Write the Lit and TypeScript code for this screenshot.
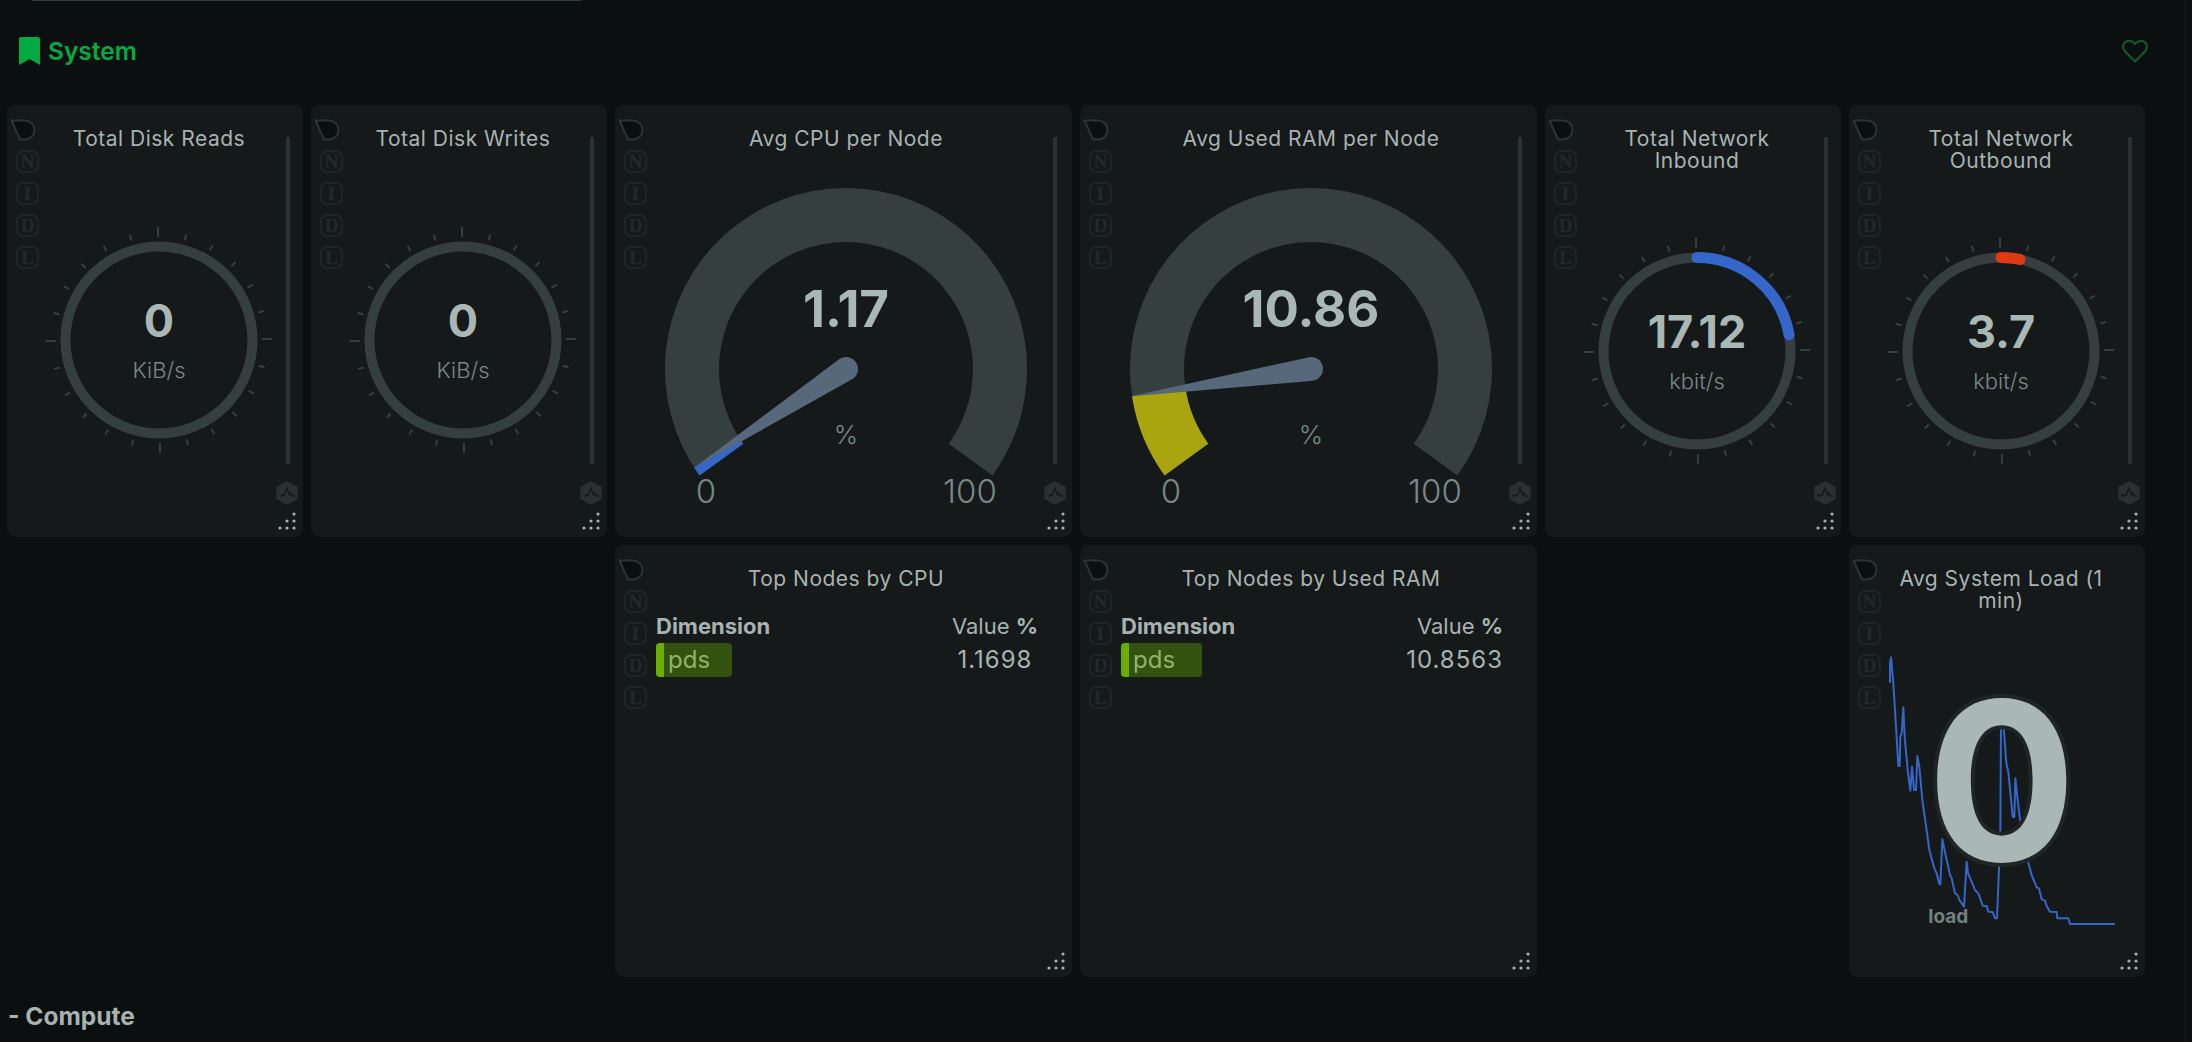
import { LitElement, css, html, svg } from "lit";
import { customElement } from "lit/decorators.js";

const BLUE = "#3566c9";
const RED = "#e03a12";
const YELLOW = "#a9a50e";

type Card =
  | { kind: "ring"; title: string; value: string; unit: string; sweep?: number; color?: string }
  | { kind: "dial"; title: string; value: string; pct: number; color: string }
  | { kind: "table"; title: string; value: string; pill: number }
  | { kind: "load"; title: string };

// row 1 runs across all six columns, row 2 only has cards under columns 3, 4 and 6
const CARDS: (Card & { col: number; row: number })[] = [
  { col: 1, row: 1, kind: "ring", title: "Total Disk Reads", value: "0", unit: "KiB/s" },
  { col: 2, row: 1, kind: "ring", title: "Total Disk Writes", value: "0", unit: "KiB/s" },
  { col: 3, row: 1, kind: "dial", title: "Avg CPU per Node", value: "1.17", pct: 1.17, color: BLUE },
  { col: 4, row: 1, kind: "dial", title: "Avg Used RAM per Node", value: "10.86", pct: 10.86, color: YELLOW },
  { col: 5, row: 1, kind: "ring", title: "Total Network Inbound", value: "17.12", unit: "kbit/s", sweep: 80, color: BLUE },
  { col: 6, row: 1, kind: "ring", title: "Total Network Outbound", value: "3.7", unit: "kbit/s", sweep: 11.7, color: RED },
  { col: 3, row: 2, kind: "table", title: "Top Nodes by CPU", value: "1.1698", pill: 76 },
  { col: 4, row: 2, kind: "table", title: "Top Nodes by Used RAM", value: "10.8563", pill: 81 },
  { col: 6, row: 2, kind: "load", title: "Avg System Load (1 min)" },
];

// traced from the chart, in 1/3 px units
const LOAD_LINE =
  "150,428 150,370 153,352 160,430 168,560 175,678 179,678 181,590 185,580 190,502 194,590 203,690 211,752 216,680 222,750 228,750 232,648 238,680 247,780 257,850 268,930 283,985 290,1000 297,1030 301,1033 307,898 318,950 330,1005 335,1015 345,1060 353,1065 358,1080 372,1100 380,965 384,1000 395,1025 405,1050 415,1060 428,1097 440,1098 445,1115 458,1116 465,1135 471,1135 477,985 481,875 483,560 487,530 491,560 499,670 505,695 518,830 523,832 526,715 533,780 541,845 565,968 575,1005 590,1042 597,1045 605,1078 615,1082 620,1098 630,1115 650,1116 652,1135 685,1135 690,1152 825,1152";

const polar = (r: number, deg: number) => {
  const a = (deg * Math.PI) / 180;
  return [r * Math.sin(a), -r * Math.cos(a)];
};

const wedge = (r1: number, r2: number, from: number, to: number) => {
  const [ax, ay] = polar(r1, from);
  const [bx, by] = polar(r1, to);
  const [cx, cy] = polar(r2, to);
  const [dx, dy] = polar(r2, from);
  const large = to - from > 180 ? 1 : 0;
  return `M${ax} ${ay}A${r1} ${r1} 0 ${large} 1 ${bx} ${by}L${cx} ${cy}A${r2} ${r2} 0 ${large} 0 ${dx} ${dy}Z`;
};

@customElement("app-root")
export class AppRoot extends LitElement {
  static styles = css`
    :host {
      display: flex;
      height: 100vh;
      overflow: hidden;
      background: #0b0f10;
      font-family: Inter, "Liberation Sans", sans-serif;
    }
    main {
      flex: 1;
      min-width: 0;
    }
    .track {
      width: 7px;
      flex: none;
      border-left: 1px solid #1a1f20;
      box-sizing: border-box;
    }
    .topline {
      width: 549px;
      height: 1px;
      margin-left: 32px;
      background: #2e3739;
    }
    .head {
      height: 104px;
      box-sizing: border-box;
      padding: 0 37px 5px 19px;
      display: flex;
      align-items: center;
      gap: 8px;
    }
    .head b {
      flex: 1;
      color: #00ab44;
      font-size: 24.5px;
      font-weight: 600;
    }
    .grid {
      display: grid;
      grid-template-columns: 296px 296px 457px 457px 296px 296px;
      grid-template-rows: 432px 432px;
      gap: 8px;
      padding-left: 7px;
    }
    .card {
      position: relative;
      display: flex;
      flex-direction: column;
      box-sizing: border-box;
      padding: 23px 31px 7px 39px;
      background: #15191a;
      border-radius: 8px;
    }
    .card.wide {
      padding-left: 36px;
    }
    .title {
      margin: 0;
      font-size: 21px;
      font-weight: 400;
      letter-spacing: 0.5px;
      line-height: 22px;
      text-align: center;
      color: #a7b3b1;
    }
    .body {
      flex: 1;
      min-height: 0;
      display: flex;
      align-items: center;
      justify-content: center;
    }
    .body svg {
      flex: none;
      overflow: visible;
    }
    .drop {
      position: absolute;
      left: 3px;
      top: 14px;
    }
    .nidl {
      position: absolute;
      left: 9px;
      top: 45px;
      display: flex;
      flex-direction: column;
      gap: 9px;
    }
    .nidl span {
      width: 23px;
      height: 23px;
      box-sizing: border-box;
      border: 2px solid #1f2526;
      border-radius: 7px;
      display: flex;
      align-items: center;
      justify-content: center;
      font: 700 19px "Liberation Serif", serif;
      color: #232929;
    }
    .slider {
      position: absolute;
      right: 13px;
      top: 32px;
      width: 4px;
      height: 327px;
      background: #2a3234;
    }
    .hex {
      position: absolute;
      right: 5px;
      top: 376px;
    }
    .wide .slider {
      right: 15px;
    }
    .wide .hex {
      right: 6px;
    }
    .dots {
      position: absolute;
      right: 6px;
      bottom: 6px;
    }
    .tick {
      stroke: #363f40;
      stroke-width: 2;
    }
    .value {
      fill: #a9b7b5;
      font-weight: 700;
      text-anchor: middle;
    }
    .unit {
      fill: #788887;
      font-weight: 300;
      text-anchor: middle;
    }
    .table {
      display: grid;
      grid-template-columns: 1fr auto;
      align-items: center;
      row-gap: 3px;
      margin: 22px 3px 0 5px;
      font-size: 22px;
      line-height: 28px;
      color: #a7b3b1;
    }
    .table .dim {
      font-weight: 700;
    }
    .table .val {
      text-align: right;
    }
    .table .num {
      text-align: center;
      font-size: 24px;
      letter-spacing: 1px;
    }
    .table b {
      font-weight: 700;
    }
    .pill {
      height: 34px;
      box-sizing: border-box;
      padding-left: 4px;
      border-left: 8px solid #6aae00;
      border-radius: 4px;
      background: #34520f;
      color: #8fb36a;
      font-size: 24px;
      line-height: 33px;
    }
    .compute {
      margin: 25px 0 0 8px;
      font-size: 24.5px;
      font-weight: 700;
      line-height: 28px;
      color: #a7b3b1;
    }
  `;

  private chrome(small: boolean) {
    return html`
      <svg class="drop" width="27" height="22" viewBox="0 0 27 22">
        <path d="M1.5 1.5H15a9.5 9.5 0 0 1 0 19H10Z" fill="#0b0f10" stroke="#2c3436" stroke-width="2" stroke-linejoin="round" />
      </svg>
      <div class="nidl">${["N", "I", "D", "L"].map((l) => html`<span>${l}</span>`)}</div>
      ${small
        ? html`
            <div class="slider"></div>
            <svg class="hex" width="22" height="24" viewBox="0 0 22 24">
              <path d="M11 1 21 6.5V17.5L11 23 1 17.5V6.5Z" fill="#2a3133" stroke="#2a3133" stroke-width="1.5" stroke-linejoin="round" />
              <path d="M3 14.5H8L11 7 13.5 14 15 12 16.5 15H19.5" fill="none" stroke="#14181a" stroke-width="1.4" />
            </svg>
          `
        : ""}
      <svg class="dots" width="20" height="20" viewBox="0 0 20 20" fill="#a7b3b1">
        <circle cx="17" cy="3" r="1.6" />
        <circle cx="10" cy="10" r="1.6" />
        <circle cx="17" cy="10" r="1.6" />
        <circle cx="3" cy="17" r="1.6" />
        <circle cx="10" cy="17" r="1.6" />
        <circle cx="17" cy="17" r="1.6" />
      </svg>
    `;
  }

  private ring(c: Extract<Card, { kind: "ring" }>) {
    const ticks = Array.from({ length: 24 }, (_, i) => {
      const major = i % 6 === 0;
      const [x1, y1] = polar(103, i * 15);
      const [x2, y2] = polar(major ? 113 : 109, i * 15);
      return svg`<line class="tick" x1=${x1} y1=${y1} x2=${x2} y2=${y2} />`;
    });
    const [ex, ey] = polar(93.5, c.sweep ?? 0);
    return html`
      <svg width="230" height="230" viewBox="-115 -115 230 230">
        <g transform="rotate(-0.5)">${ticks}</g>
        <circle r="93.5" fill="none" stroke="#363f40" stroke-width="10" />
        ${c.sweep
          ? svg`<path d="M0 -93.5A93.5 93.5 0 0 1 ${ex} ${ey}" fill="none" stroke=${c.color!} stroke-width="11" stroke-linecap="round" />`
          : ""}
        <text class="value" y="-3" font-size="45">${c.value}</text>
        <text class="unit" y="38" font-size="22">${c.unit}</text>
      </svg>
    `;
  }

  private dial(c: Extract<Card, { kind: "dial" }>) {
    const start = -126;
    const end = start + (c.pct / 100) * 252;
    const [tx, ty] = polar(183, end);
    // needle sides leave the hub at right angles to the needle, near enough
    const [ax, ay] = polar(12, end + 90);
    const [bx, by] = polar(12, end - 90);
    return html`
      <svg width="390" height="380" viewBox="-195 -219 390 380">
        <path d=${wedge(181, 127, start, 126)} fill="#363f40" />
        <path d=${wedge(181, 127, start, end)} fill=${c.color} />
        <path d="M${tx} ${ty}L${ax} ${ay}A12 12 0 1 1 ${bx} ${by}Z" fill="#566879" />
        <text class="value" y="-42" font-size="51">${c.value}</text>
        <text class="unit" y="75" font-size="26">%</text>
        <text class="unit" x="-140" y="134" font-size="33">0</text>
        <text class="unit" x="124" y="134" font-size="33">100</text>
      </svg>
    `;
  }

  private table(c: Extract<Card, { kind: "table" }>) {
    return html`
      <div class="table">
        <div class="dim">Dimension</div>
        <div class="val">Value <b>%</b></div>
        <div><div class="pill" style="width:${c.pill}px">pds</div></div>
        <div class="num">${c.value}</div>
      </div>
    `;
  }

  private load() {
    return html`
      <svg width="226" height="358" viewBox="144 216 678 1074">
        <polyline points=${LOAD_LINE} fill="none" stroke=${BLUE} stroke-width="6" stroke-linejoin="round" />
        <text
          x="485"
          y="963"
          font-size="665"
          font-weight="700"
          text-anchor="middle"
          fill="#a9b7b5"
          stroke="#1f2526"
          stroke-width="24"
          paint-order="stroke"
        >0</text>
        <text x="325" y="1148" font-size="57" font-weight="700" text-anchor="middle" fill="#71817f">load</text>
      </svg>
    `;
  }

  private card(c: Card & { col: number; row: number }) {
    const isRing = c.kind === "ring" || c.kind === "load";
    const content =
      c.kind === "ring"
        ? this.ring(c)
        : c.kind === "dial"
          ? this.dial(c)
          : c.kind === "load"
            ? this.load()
            : "";
    return html`
      <section class="card ${isRing ? "" : "wide"}" style="grid-area:${c.row}/${c.col}">
        ${this.chrome(c.kind === "ring" || c.kind === "dial")}
        <h3 class="title">${c.title}</h3>
        ${c.kind === "table" ? this.table(c) : html`<div class="body">${content}</div>`}
      </section>
    `;
  }

  render() {
    return html`
      <main>
        <div class="topline"></div>
        <div class="head">
          <svg width="21" height="28" viewBox="0 0 21 28">
            <path d="M0 2a2 2 0 0 1 2-2H19a2 2 0 0 1 2 2V28L10.5 22 0 28Z" fill="#00ab44" />
          </svg>
          <b>System</b>
          <svg width="26" height="24" viewBox="0 0 26 24">
            <path
              d="M13 22.5 2.8 12.2a6.2 6.2 0 0 1 0-8.7 6 6 0 0 1 8.6 0L13 5l1.6-1.5a6 6 0 0 1 8.6 0 6.2 6.2 0 0 1 0 8.7Z"
              fill="none"
              stroke="#0a5f2b"
              stroke-width="2"
              stroke-linejoin="round"
            />
          </svg>
        </div>
        <div class="grid">${CARDS.map((c) => this.card(c))}</div>
        <div class="compute">- Compute</div>
      </main>
      <div class="track"></div>
    `;
  }
}
